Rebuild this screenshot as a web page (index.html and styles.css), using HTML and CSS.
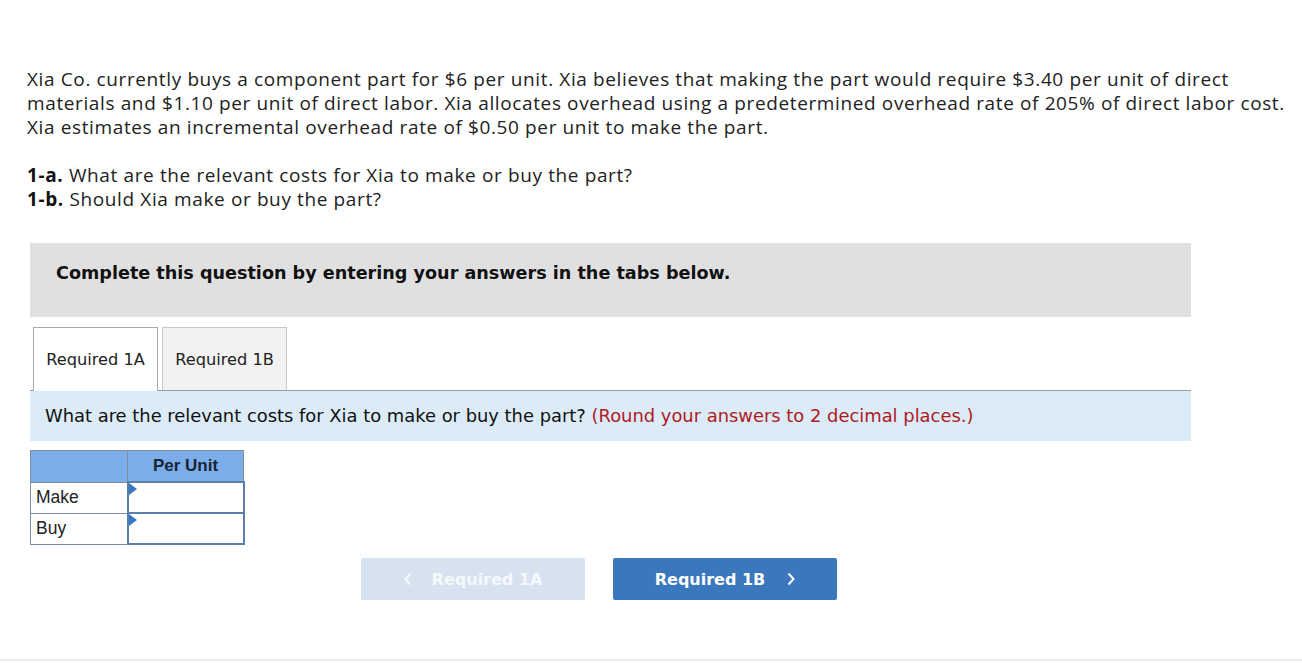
FILE: index.html
```html
<!DOCTYPE html>
<html>
<head>
<meta charset="utf-8">
<link rel="stylesheet" href="styles.css">
</head>
<body>
<div class="page">
  <div class="intro">
    <p class="lead">Xia Co. currently buys a component part for $6 per unit. Xia believes that making the part would require $3.40 per unit of direct<br>materials and $1.10 per unit of direct labor. Xia allocates overhead using a predetermined overhead rate of 205% of direct labor cost.<br>Xia estimates an incremental overhead rate of $0.50 per unit to make the part.</p>
    <p class="reqs"><b>1-a.</b> What are the relevant costs for Xia to make or buy the part?<br><b>1-b.</b> Should Xia make or buy the part?</p>
  </div>
  <div class="panel">
    <div class="notice">Complete this question by entering your answers in the tabs below.</div>
    <div class="tabs">
      <div class="tab active">Required 1A</div>
      <div class="tab">Required 1B</div>
    </div>
    <div class="prompt">What are the relevant costs for Xia to make or buy the part? <span class="hint">(Round your answers to 2 decimal places.)</span></div>
    <table class="grid">
      <tr><th class="blank"></th><th>Per Unit</th></tr>
      <tr><td class="label">Make</td><td class="input"><span class="flag"></span></td></tr>
      <tr><td class="label">Buy</td><td class="input"><span class="flag"></span></td></tr>
    </table>
    <div class="nav">
      <div class="btn prev"><svg class="chev" width="8" height="14" viewBox="0 0 8 14"><path d="M6.5 1.5 L1.5 7 L6.5 12.5" fill="none" stroke="currentColor" stroke-width="2"/></svg>Required 1A</div>
      <div class="btn next">Required 1B<svg class="chev" width="8" height="14" viewBox="0 0 8 14"><path d="M1.5 1.5 L6.5 7 L1.5 12.5" fill="none" stroke="currentColor" stroke-width="2"/></svg></div>
    </div>
  </div>
</div>
<div class="footer-line"></div>
</body>
</html>
```
FILE: styles.css
```css
html, body { margin: 0; padding: 0; background: #fff; }
body { width: 1302px; height: 666px; position: relative; overflow: hidden; }
.page { padding: 67px 0 0 27px; }
.intro { font-family: "Open Sans", "Liberation Sans", sans-serif; font-size: 19px; letter-spacing: 0.62px; color: #222; line-height: 24px; }
.intro p { margin: 0; white-space: nowrap; }
.reqs { margin-top: 24px !important; }
.reqs b { font-weight: 700; color: #111; }
.panel { margin: 32px 0 0 3px; width: 1161px; }
.notice { background: #e0e0e0; height: 74px; box-sizing: border-box; padding: 18px 0 0 26px; font-family: "DejaVu Sans", Verdana, sans-serif; font-weight: bold; font-size: 17.6px; line-height: 24px; color: #111; }
.tabs { display: flex; gap: 4px; margin-top: 10px; padding-left: 3px; height: 63px; border-bottom: 1px solid #9a9a9a; }
.tab { width: 125px; height: 63px; box-sizing: border-box; border: 1px solid #c8c8c8; border-bottom: none; background: #f2f2f2; font-family: "DejaVu Sans", Verdana, sans-serif; font-size: 16.2px; color: #222; display: flex; align-items: center; justify-content: center; }
.tab.active { background: #fff; height: 64px; border-color: #aaa; position: relative; z-index: 1; }
.prompt { background: #dcebf8; height: 50px; box-sizing: border-box; padding: 14px 0 0 15px; font-family: "DejaVu Sans", Verdana, sans-serif; font-size: 17.9px; line-height: 22px; color: #111; }
.hint { color: #b0191e; }
.grid { border-collapse: collapse; margin-top: 9px; font-family: "Liberation Sans", Arial, sans-serif; font-size: 17.5px; }
.grid th { background: #7badea; height: 30px; padding: 0; border: 1px solid #7f8c9b; font-weight: bold; color: #1a2433; font-size: 17px; }
.grid th.blank { width: 96px; }
.grid th:last-child { width: 115px; }
.grid td { height: 31px; padding: 0; box-sizing: border-box; }
.grid td.label { border: 1px solid #7f8c9b; padding-left: 5px; color: #222; }
.grid td.input { border: 2px solid #5b7fa8; position: relative; background: #fff; }
.flag { position: absolute; left: 0; top: 0; width: 0; height: 0; border-top: 6px solid transparent; border-bottom: 6px solid transparent; border-left: 8px solid #3a78c2; }
.nav { display: flex; gap: 28px; margin: 13px 0 0 331px; }
.btn { width: 224px; height: 42px; box-sizing: border-box; border-radius: 2px; display: flex; align-items: center; justify-content: center; font-family: "DejaVu Sans", Verdana, sans-serif; font-weight: bold; font-size: 16px; color: #fff; }
.btn.prev { background: #d6e2f0; color: #f6f9fc; }
.btn.next { background: #3a77bd; }
.prev .chev { margin-right: 20px; }
.next .chev { margin-left: 22px; }
.footer-line { position: absolute; left: 0; right: 0; top: 659px; height: 2px; background: #eaeaea; }
```
